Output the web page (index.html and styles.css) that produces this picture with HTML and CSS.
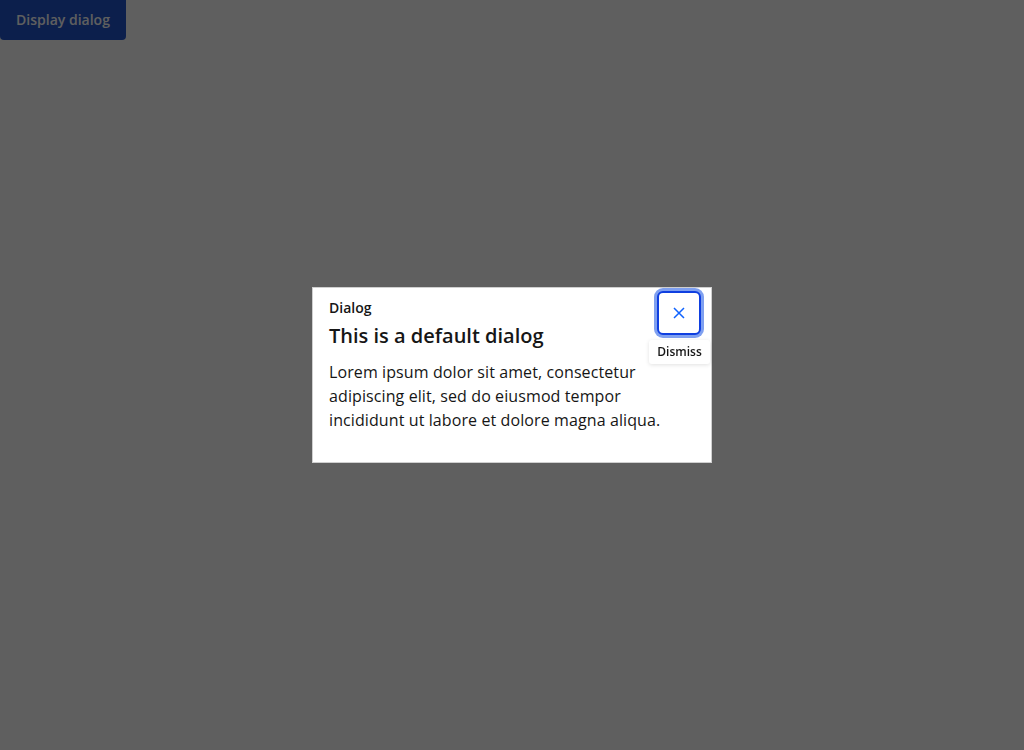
FILE: index.html
```html
<!DOCTYPE html>
<html lang="en">
<head>
<meta charset="utf-8">
<title>Dialog</title>
<link rel="stylesheet" href="styles.css">
</head>
<body>
<button class="trigger" type="button">Display dialog</button>
<div class="overlay">
  <div class="dialog" role="dialog" aria-labelledby="dlg-title">
    <div class="dialog-head">
      <div class="heading">
        <div class="eyebrow">Dialog</div>
        <h2 class="title" id="dlg-title">This is a default dialog</h2>
      </div>
      <div class="close-wrap">
        <button class="close" type="button" aria-label="Dismiss">
          <svg width="16" height="16" viewBox="0 0 16 16" aria-hidden="true"><path d="M3 3 L13 13 M13 3 L3 13" stroke="#0f62fe" stroke-width="1.5" fill="none"/></svg>
        </button>
        <div class="tooltip">Dismiss</div>
      </div>
    </div>
    <p class="body">Lorem ipsum dolor sit amet, consectetur adipiscing elit, sed do eiusmod tempor incididunt ut labore et dolore magna aliqua.</p>
  </div>
</div>
</body>
</html>
```
FILE: styles.css
```css
html, body {
  margin: 0;
  padding: 0;
  height: 100%;
}
body {
  background: #ffffff;
  font-family: "Open Sans", "Noto Sans", sans-serif;
  color: #161616;
}
.trigger {
  display: block;
  margin: 0;
  width: 126px;
  height: 40px;
  border: 0;
  border-radius: 0 0 4px 4px;
  background: #2054cb;
  color: #ffffff;
  font-family: "Open Sans", sans-serif;
  font-size: 14px;
  font-weight: 600;
  padding: 0 0 2px;
}
.overlay {
  position: fixed;
  inset: 0;
  background: rgba(0, 0, 0, 0.627);
  display: flex;
  align-items: center;
  justify-content: center;
}
.dialog {
  box-sizing: border-box;
  width: 400px;
  height: 176px;
  background: #ffffff;
  border: 1px solid #cfcfcf;
  padding: 0 16px;
}
.dialog-head {
  display: flex;
  justify-content: space-between;
}
.heading {
  padding-top: 10px;
}
.eyebrow {
  font-size: 14px;
  font-weight: 600;
  line-height: 20px;
}
.title {
  margin: 5px 0 0;
  font-size: 20px;
  font-weight: 600;
  line-height: 26px;
}
.close-wrap {
  position: relative;
  margin-top: 3px;
  margin-right: -6px;
}
.close {
  box-sizing: border-box;
  width: 44px;
  height: 44px;
  padding: 0;
  margin: 0;
  border: 2px solid #0f3fe0;
  border-radius: 6px;
  background: #ffffff;
  box-shadow: 0 0 0 3px #7fa0f0;
  display: flex;
  align-items: center;
  justify-content: center;
}
.tooltip {
  position: absolute;
  top: 49px;
  right: -9px;
  width: 61px;
  height: 24px;
  box-sizing: border-box;
  background: #ffffff;
  border-radius: 3px;
  box-shadow: 0 1px 4px rgba(0, 0, 0, 0.12);
  font-size: 12px;
  font-weight: 600;
  line-height: 24px;
  text-align: center;
  color: #161616;
}
.body {
  margin: 11px 0 0;
  font-size: 16px;
  line-height: 24px;
  letter-spacing: 0.1px;
  max-width: 350px;
}
```
